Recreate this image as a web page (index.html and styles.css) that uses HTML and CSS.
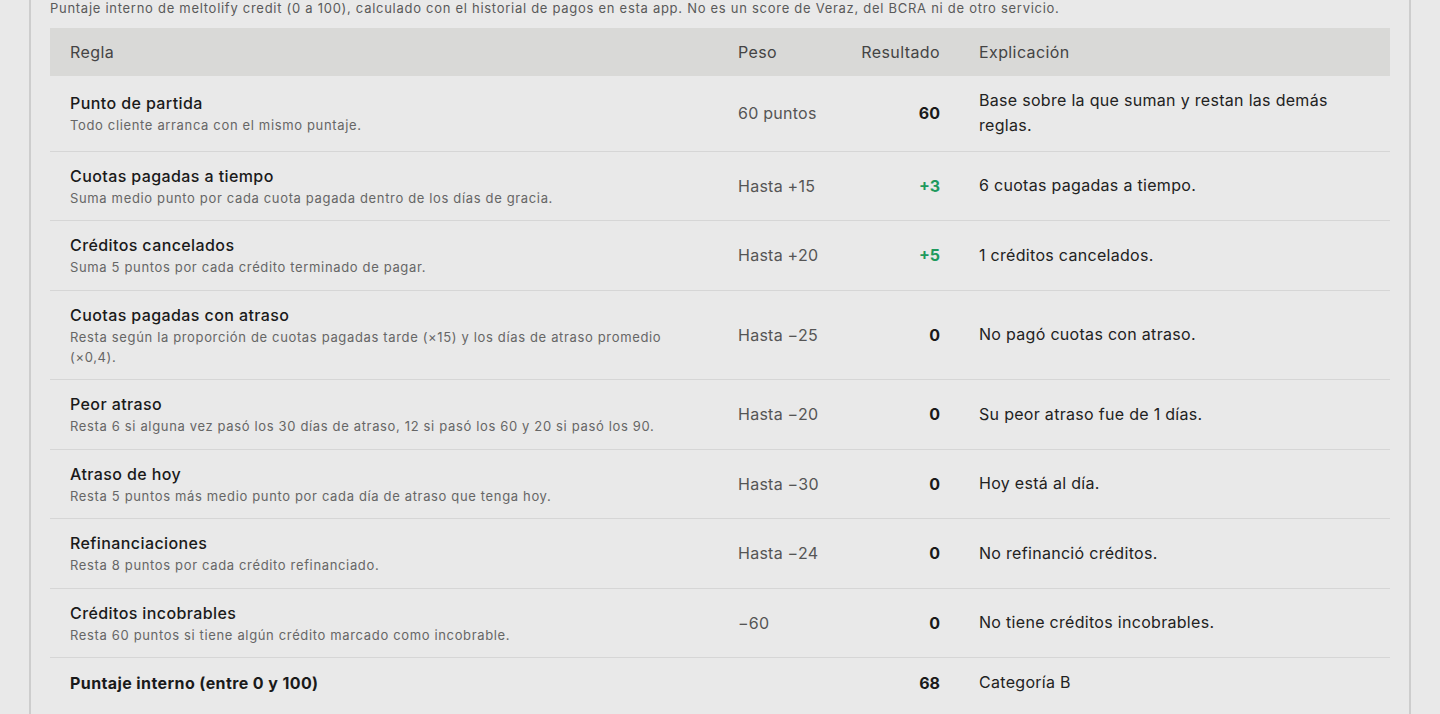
FILE: index.html
```html
<!DOCTYPE html>
<html lang="es">
<head>
<meta charset="utf-8">
<title>Puntaje interno</title>
<link rel="stylesheet" href="styles.css">
</head>
<body>
<div class="page">
  <section class="card">
    <p class="intro">Puntaje interno de meltolify credit (0 a 100), calculado con el historial de pagos en esta app. No es un score de Veraz, del BCRA ni de otro servicio.</p>
    <table class="score">
      <colgroup>
        <col class="c-rule"><col class="c-weight"><col class="c-result"><col class="c-expl">
      </colgroup>
      <thead>
        <tr><th>Regla</th><th>Peso</th><th class="num">Resultado</th><th class="expl-h">Explicación</th></tr>
      </thead>
      <tbody>
        <tr class="tall">
          <td><div class="title">Punto de partida</div><div class="sub">Todo cliente arranca con el mismo puntaje.</div></td>
          <td class="weight">60 puntos</td><td class="num res">60</td>
          <td class="expl">Base sobre la que suman y restan las demás reglas.</td>
        </tr>
        <tr>
          <td><div class="title">Cuotas pagadas a tiempo</div><div class="sub">Suma medio punto por cada cuota pagada dentro de los días de gracia.</div></td>
          <td class="weight">Hasta +15</td><td class="num res pos">+3</td>
          <td class="expl">6 cuotas pagadas a tiempo.</td>
        </tr>
        <tr>
          <td><div class="title">Créditos cancelados</div><div class="sub">Suma 5 puntos por cada crédito terminado de pagar.</div></td>
          <td class="weight">Hasta +20</td><td class="num res pos">+5</td>
          <td class="expl">1 créditos cancelados.</td>
        </tr>
        <tr>
          <td><div class="title">Cuotas pagadas con atraso</div><div class="sub">Resta según la proporción de cuotas pagadas tarde (×15) y los días de atraso promedio (×0,4).</div></td>
          <td class="weight">Hasta −25</td><td class="num res">0</td>
          <td class="expl">No pagó cuotas con atraso.</td>
        </tr>
        <tr>
          <td><div class="title">Peor atraso</div><div class="sub">Resta 6 si alguna vez pasó los 30 días de atraso, 12 si pasó los 60 y 20 si pasó los 90.</div></td>
          <td class="weight">Hasta −20</td><td class="num res">0</td>
          <td class="expl">Su peor atraso fue de 1 días.</td>
        </tr>
        <tr>
          <td><div class="title">Atraso de hoy</div><div class="sub">Resta 5 puntos más medio punto por cada día de atraso que tenga hoy.</div></td>
          <td class="weight">Hasta −30</td><td class="num res">0</td>
          <td class="expl">Hoy está al día.</td>
        </tr>
        <tr>
          <td><div class="title">Refinanciaciones</div><div class="sub">Resta 8 puntos por cada crédito refinanciado.</div></td>
          <td class="weight">Hasta −24</td><td class="num res">0</td>
          <td class="expl">No refinanció créditos.</td>
        </tr>
        <tr>
          <td><div class="title">Créditos incobrables</div><div class="sub">Resta 60 puntos si tiene algún crédito marcado como incobrable.</div></td>
          <td class="weight">−60</td><td class="num res">0</td>
          <td class="expl">No tiene créditos incobrables.</td>
        </tr>
        <tr class="total">
          <td class="total-label">Puntaje interno (entre 0 y 100)</td>
          <td></td><td class="num res">68</td>
          <td class="expl">Categoría B</td>
        </tr>
      </tbody>
    </table>
  </section>
</div>
</body>
</html>
```
FILE: styles.css
```css
html, body {
  margin: 0;
  padding: 0;
  background: #e9e9e9;
}
body {
  font-family: Inter, "Noto Sans", "Liberation Sans", sans-serif;
  color: #1c1c1c;
  overflow: hidden;
}
.page {
  padding: 0 29px;
}
.card {
  border-left: 2px solid #cdcdcd;
  border-right: 2px solid #cdcdcd;
  padding: 0 19px 40px;
  background: #e9e9e9;
}
.intro {
  margin: 0 0 12px;
  font-size: 13px;
  line-height: 16px;
  letter-spacing: 0.72px;
  color: #5a5a5a;
}
.score {
  width: 100%;
  border-collapse: collapse;
  table-layout: fixed;
}
.c-rule { width: 668px; }
.c-weight { width: 121px; }
.c-result { width: 121px; }
.c-expl { width: auto; }
.score th {
  background: #d9d9d7;
  text-align: left;
  font-weight: 400;
  font-size: 16px;
  line-height: 24px;
  letter-spacing: 0.4px;
  color: #444;
  padding: 12px 20px;
}
.score td {
  padding: 12.25px 20px;
  border-top: 1px solid #d6d6d6;
  vertical-align: middle;
}
.score tbody tr:first-child td {
  border-top: none;
}
.score .num {
  text-align: right;
}
.score .expl,
.score .expl-h {
  padding-left: 19px;
}
.title {
  font-size: 16px;
  line-height: 24px;
  font-weight: 500;
  letter-spacing: 0.4px;
  color: #1a1a1a;
}
.sub {
  font-size: 13px;
  line-height: 20px;
  letter-spacing: 0.65px;
  color: #666;
}
.weight {
  font-size: 16px;
  line-height: 24px;
  letter-spacing: 0.25px;
  color: #555;
}
.res {
  font-size: 16px;
  line-height: 24px;
  font-weight: 700;
  color: #1a1a1a;
}
.res.pos {
  color: #1f9a5e;
}
.expl {
  font-size: 16px;
  line-height: 25px;
  letter-spacing: 0.3px;
  color: #222;
}
.total-label {
  font-size: 16px;
  line-height: 24px;
  font-weight: 700;
  letter-spacing: 0.4px;
  color: #1a1a1a;
}
```
